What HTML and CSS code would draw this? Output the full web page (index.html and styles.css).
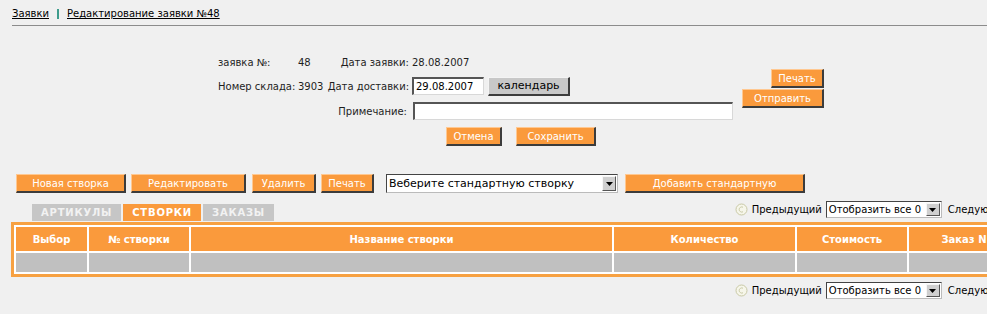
FILE: index.html
```html
<!DOCTYPE html>
<html lang="ru">
<head>
  <meta charset="UTF-8" />
  <title>Редактирование заявки №48</title>
  <link rel="stylesheet" href="styles.css">
</head>
<body>
  <div class="page">
    <div class="crumbs">
      <a href="#">Заявки</a>
      <span class="sep"></span>
      <a href="#">Редактирование заявки №48</a>
    </div>

    <div class="order">
      <div class="order-grid">
        <span>заявка №:</span>
        <span>48</span>
        <span class="lbl">Дата заявки:</span>
        <span>28.08.2007</span>

        <span>Номер склада:</span>
        <span>3903</span>
        <span class="lbl">Дата доставки:</span>
        <span class="cell-inline">
          <input class="field date" type="text" value="29.08.2007">
          <button class="btn grey cal">календарь</button>
        </span>

        <span class="lbl note-lbl">Примечание:</span>
        <span><input class="field note" type="text"></span>

        <span class="form-actions">
          <button class="btn cancel">Отмена</button>
          <button class="btn save">Сохранить</button>
        </span>
      </div>
      <div class="side-actions">
        <button class="btn print">Печать</button>
        <button class="btn send">Отправить</button>
      </div>
    </div>

    <div class="toolbar">
      <button class="btn w-new">Новая створка</button>
      <button class="btn w-edit">Редактировать</button>
      <button class="btn w-del">Удалить</button>
      <button class="btn w-print">Печать</button>
      <div class="select std">
        <span class="select-text">Веберите стандартную створку</span>
        <span class="select-arrow"><svg width="7" height="4" viewBox="0 0 7 4"><path d="M0 0h7L3.5 4z" fill="#000"/></svg></span>
      </div>
      <button class="btn w-add">Добавить стандартную</button>
    </div>

    <div class="tabs-row">
      <div class="tabs">
        <span class="tab">АРТИКУЛЫ</span>
        <span class="tab active">СТВОРКИ</span>
        <span class="tab">ЗАКАЗЫ</span>
      </div>
      <div class="pager">
        <svg class="nav-ico" width="13" height="13" viewBox="0 0 13 13"><circle cx="6.5" cy="6.5" r="5.5" fill="#f6f6ea" stroke="#c9c9a6"/><path d="M8 4.2a2.6 2.6 0 1 0 0 4.6" fill="none" stroke="#c9c9a6"/></svg>
        <span>Предыдущий</span>
        <div class="select small">
          <span class="select-text">Отобразить все 0</span>
          <span class="select-arrow"><svg width="7" height="4" viewBox="0 0 7 4"><path d="M0 0h7L3.5 4z" fill="#000"/></svg></span>
        </div>
        <span>Следующий</span>
        <svg class="nav-ico" width="13" height="13" viewBox="0 0 13 13"><circle cx="6.5" cy="6.5" r="5.5" fill="#f6f6ea" stroke="#c9c9a6"/><path d="M5 4.2a2.6 2.6 0 1 1 0 4.6" fill="none" stroke="#c9c9a6"/></svg>
      </div>
    </div>

    <table class="grid">
      <colgroup>
        <col style="width:71px"><col style="width:100px"><col style="width:421px">
        <col style="width:181px"><col style="width:110px"><col style="width:110px">
      </colgroup>
      <thead>
        <tr>
          <th>Выбор</th>
          <th>№ створки</th>
          <th>Название створки</th>
          <th>Количество</th>
          <th>Стоимость</th>
          <th>Заказ N</th>
        </tr>
      </thead>
      <tbody>
        <tr><td></td><td></td><td></td><td></td><td></td><td></td></tr>
      </tbody>
    </table>

    <div class="pager-row">
      <div class="pager">
        <svg class="nav-ico" width="13" height="13" viewBox="0 0 13 13"><circle cx="6.5" cy="6.5" r="5.5" fill="#f6f6ea" stroke="#c9c9a6"/><path d="M8 4.2a2.6 2.6 0 1 0 0 4.6" fill="none" stroke="#c9c9a6"/></svg>
        <span>Предыдущий</span>
        <div class="select small">
          <span class="select-text">Отобразить все 0</span>
          <span class="select-arrow"><svg width="7" height="4" viewBox="0 0 7 4"><path d="M0 0h7L3.5 4z" fill="#000"/></svg></span>
        </div>
        <span>Следующий</span>
        <svg class="nav-ico" width="13" height="13" viewBox="0 0 13 13"><circle cx="6.5" cy="6.5" r="5.5" fill="#f6f6ea" stroke="#c9c9a6"/><path d="M5 4.2a2.6 2.6 0 1 1 0 4.6" fill="none" stroke="#c9c9a6"/></svg>
      </div>
    </div>
  </div>
</body>
</html>
```

FILE: styles.css
```css
html {
  overflow: hidden;
}
body {
  margin: 0;
  background: #f0f0f0;
  color: #1e1e1e;
  font-family: 'DejaVu Sans', Verdana, sans-serif;
  font-size: 10px;
}
.page {
  width: 1040px;
}
.crumbs {
  margin-left: 12px;
  padding: 7px 0 5px 0;
  line-height: 13px;
  border-bottom: 1px solid #8c8c8c;
  display: flex;
  align-items: center;
}
.crumbs a {
  color: #000;
  text-decoration: underline;
}
.crumbs .sep {
  width: 2px;
  height: 10px;
  background: #3e9c8c;
  margin: 0 8px;
}
.order {
  display: flex;
  padding-left: 218px;
  margin-top: 28px;
}
.order-grid {
  display: grid;
  grid-template-columns: 80px 29px 85px 321px;
  grid-template-rows: 16px 18px 18px 19px;
  row-gap: 7px;
  align-items: center;
}
.order-grid .lbl {
  text-align: right;
  padding-right: 3px;
}
.note-lbl {
  grid-column: 1 / 4;
  padding-right: 5px !important;
}
.cell-inline {
  display: flex;
  gap: 4px;
  align-items: center;
}
.field {
  box-sizing: border-box;
  height: 18px;
  background: #fff;
  border-style: solid;
  border-width: 2px 1px 1px 2px;
  border-color: #555 #d8d8d8 #d8d8d8 #555;
  font-family: 'DejaVu Sans', Verdana, sans-serif;
  font-size: 10px;
  padding: 0 2px;
  color: #000;
}
.field.date {
  width: 72px;
}
.field.note {
  width: 320px;
  margin-left: 1px;
}
.form-actions {
  grid-column: 4;
  display: flex;
  gap: 14px;
  padding-left: 34px;
}
.btn {
  box-sizing: border-box;
  height: 19px;
  background: #fa9a3c;
  color: #fff;
  border-style: solid;
  border-width: 1px 2px 2px 1px;
  border-color: #ffc891 #3c3c3c #3c3c3c #ffc891;
  font-family: 'DejaVu Sans', Verdana, sans-serif;
  font-size: 10px;
  padding: 0;
  cursor: pointer;
}
.btn.grey {
  background: #c8c8c8;
  color: #000;
  border-color: #f4f4f4 #3c3c3c #3c3c3c #f4f4f4;
  font-size: 11px;
}
.cal { width: 82px; }
.cancel { width: 56px; }
.save { width: 80px; }
.side-actions {
  margin-left: 9px;
  width: 82px;
  padding-top: 15px;
  display: flex;
  flex-direction: column;
  align-items: flex-end;
  gap: 1px;
}
.print { width: 53px; }
.send { width: 82px; }

.toolbar {
  display: flex;
  align-items: center;
  margin-top: 28px;
  padding-left: 16px;
}
.w-new { width: 110px; margin-right: 5px; }
.w-edit { width: 115px; margin-right: 6px; }
.w-del { width: 64px; margin-right: 5px; }
.w-print { width: 53px; margin-right: 12px; }
.w-add { width: 180px; margin-left: 7px; }

.select {
  box-sizing: border-box;
  display: flex;
  align-items: center;
  background: #fff;
  border-style: solid;
  border-width: 1px;
  border-color: #444 #bbb #bbb #444;
  padding: 1px;
}
.select.std {
  width: 232px;
  height: 19px;
  font-size: 11px;
}
.select.small {
  width: 116px;
  height: 17px;
}
.select-text {
  flex: 1;
  padding-left: 1px;
  color: #000;
  white-space: nowrap;
  overflow: hidden;
}
.select-arrow {
  box-sizing: border-box;
  width: 14px;
  height: 100%;
  display: flex;
  align-items: center;
  justify-content: center;
  background: #cfcfcf;
  border-style: solid;
  border-width: 1px;
  border-color: #f6f6f6 #555 #555 #f6f6f6;
}

.tabs-row {
  display: flex;
  align-items: flex-start;
  margin-top: 8px;
  padding-left: 32px;
}
.tabs {
  display: flex;
  gap: 2px;
  margin-top: 3px;
}
.tab {
  height: 17px;
  line-height: 17px;
  padding: 0 9px;
  background: #c6c6c6;
  color: #f2f2f2;
  font-weight: bold;
  font-size: 10px;
  letter-spacing: 0.8px;
}
.tab.active {
  background: #fa9a3c;
  color: #fff;
}
.pager {
  display: flex;
  align-items: center;
  gap: 4px;
  margin-left: auto;
  margin-right: 12px;
  color: #000;
}
.pager .select {
  margin-right: 2px;
}
.nav-ico {
  display: block;
}

.grid {
  margin-left: 11px;
  margin-top: 1px;
  width: 1010px;
  table-layout: fixed;
  border: 3px solid #f7a142;
  border-spacing: 2px;
  background: #fff;
}
.grid th {
  height: 24px;
  padding: 0;
  background: #fa9a3c;
  color: #fff;
  font-weight: bold;
  font-size: 10px;
  text-align: center;
}
.grid td {
  height: 19px;
  padding: 0;
  background: #c0c0c0;
}
.pager-row {
  display: flex;
  margin-top: 5px;
}
```
